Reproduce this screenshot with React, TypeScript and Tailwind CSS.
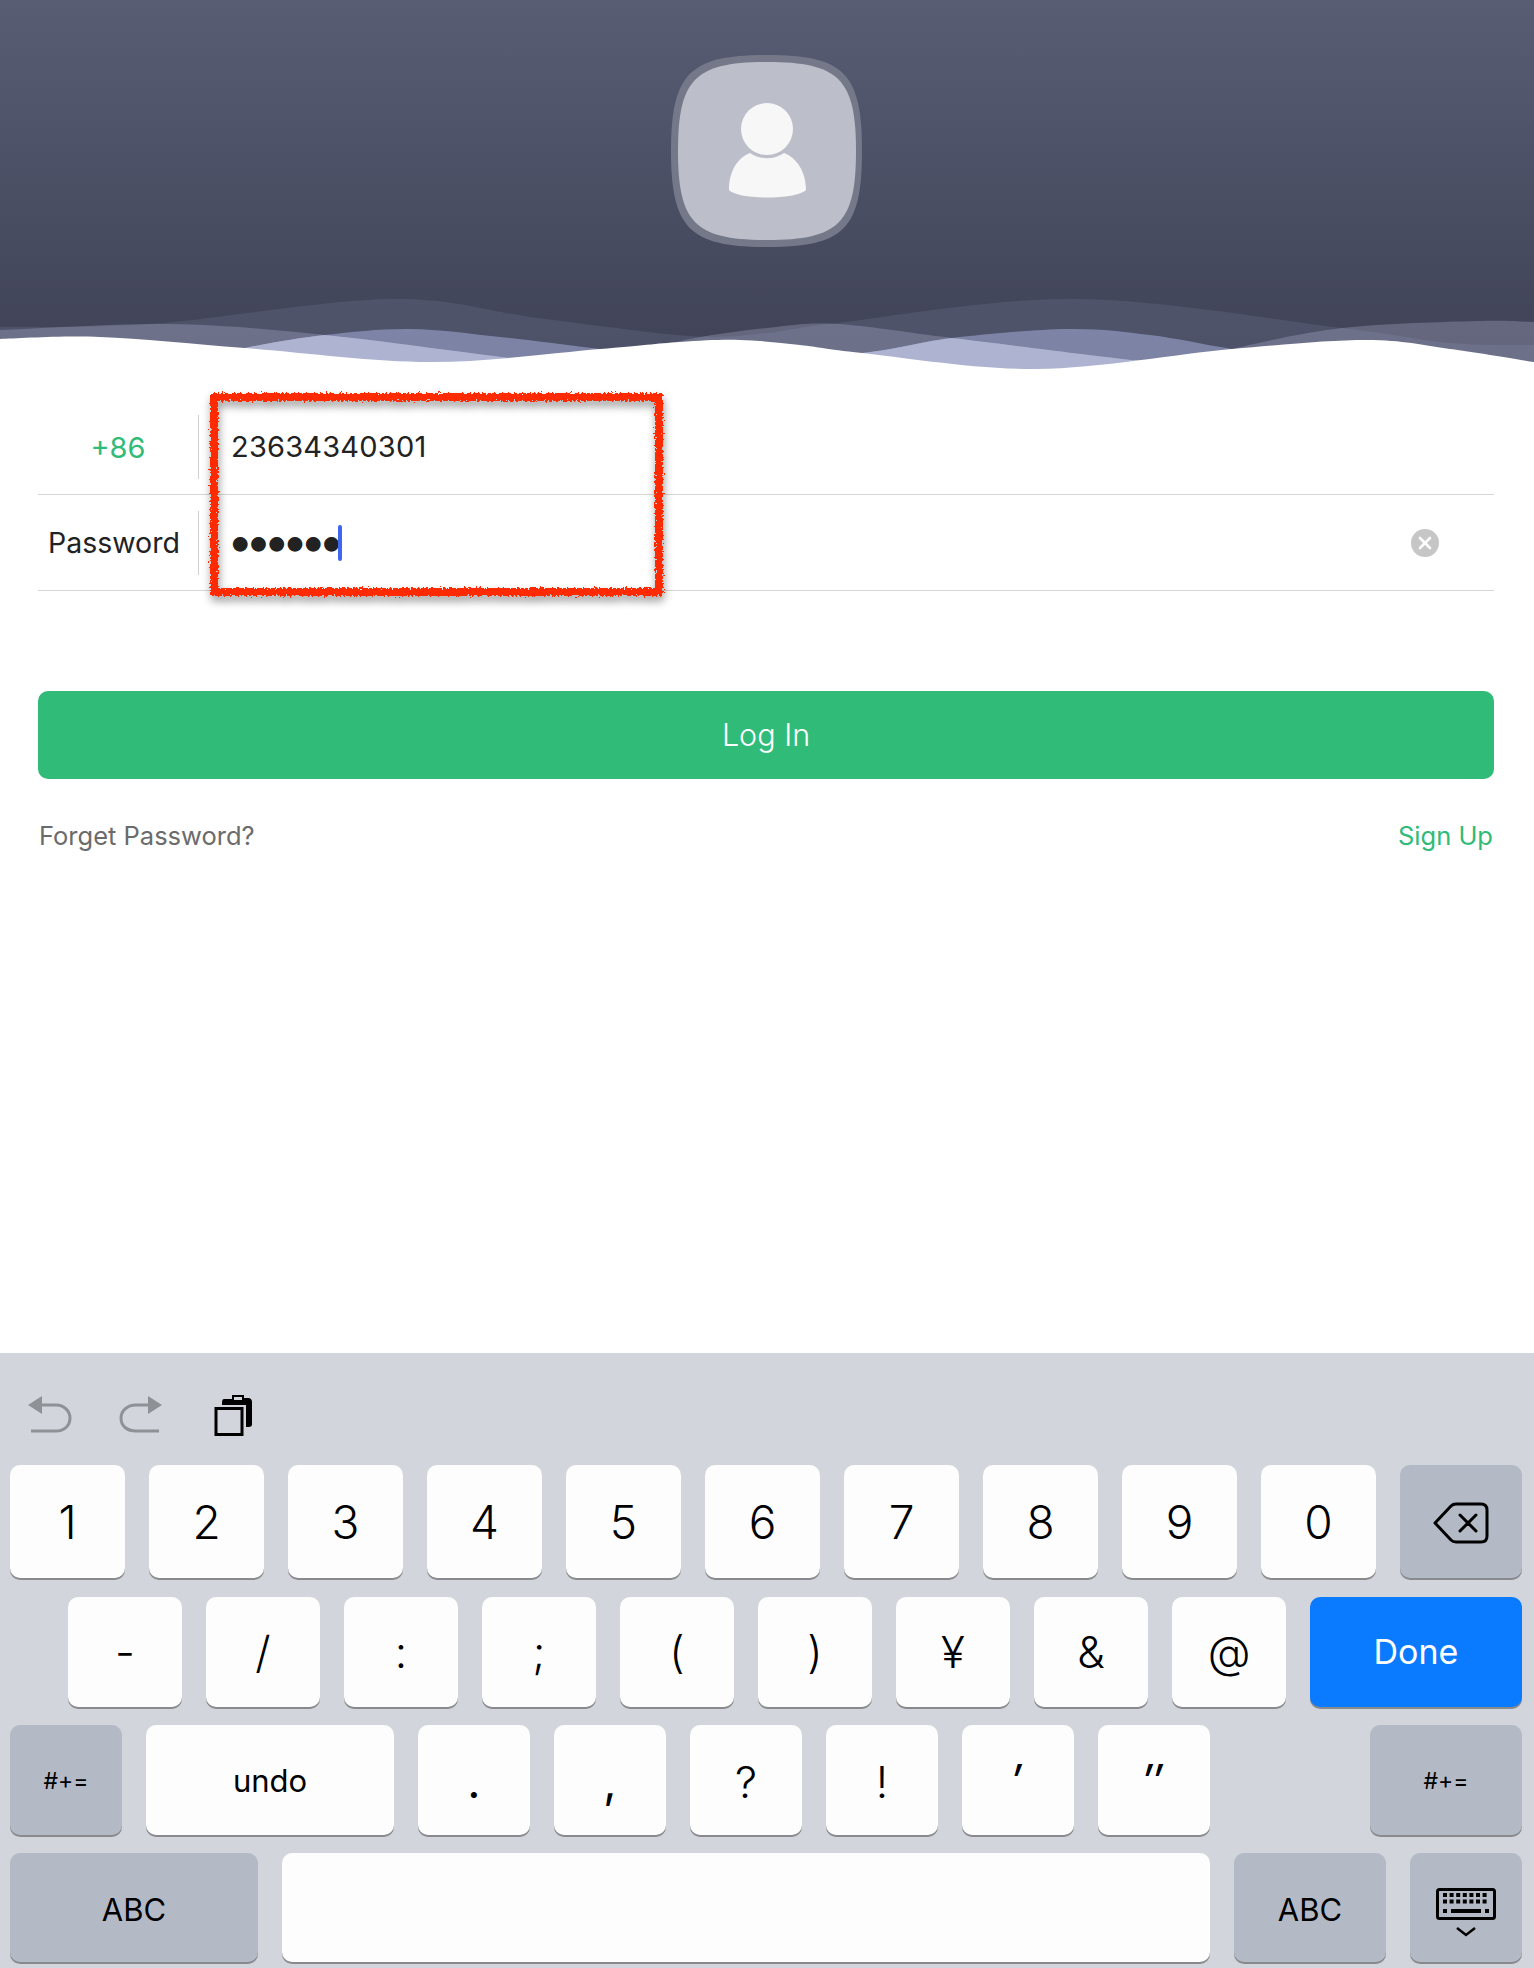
type Pt = [number, number];

// catmull-rom through the points, closed along the bottom of the header
function wave(points: Pt[]) {
    let d = `M${points[0][0]} ${points[0][1]}`;
    for (let i = 0; i < points.length - 1; i++) {
        const p0 = points[i - 1] ?? points[i];
        const p1 = points[i];
        const p2 = points[i + 1];
        const p3 = points[i + 2] ?? p2;
        const c1x = p1[0] + (p2[0] - p0[0]) / 6;
        const c1y = p1[1] + (p2[1] - p0[1]) / 6;
        const c2x = p2[0] - (p3[0] - p1[0]) / 6;
        const c2y = p2[1] - (p3[1] - p1[1]) / 6;
        d += ` C${c1x} ${c1y} ${c2x} ${c2y} ${p2[0]} ${p2[1]}`;
    }
    return `${d} L1534 400 L0 400 Z`;
}

const backWave = wave([[0, 327], [150, 324], [390, 299], [538, 318], [690, 336], [767, 333], [837, 323], [1077, 299], [1342, 328], [1450, 343], [1534, 345]]);
const midWave = wave([[0, 330], [170, 324], [325, 335], [510, 358], [590, 365], [680, 341], [767, 328], [837, 324], [952, 338], [1142, 361], [1190, 363], [1232, 349], [1342, 328], [1477, 321], [1534, 322]]);
const frontWave = wave([[0, 380], [120, 375], [245, 348], [325, 335], [410, 329], [500, 337], [600, 349], [720, 362], [862, 353], [952, 338], [1067, 329], [1150, 335], [1232, 349], [1340, 365], [1534, 380]]);
const whiteWave = wave([[0, 339], [100, 337], [245, 348], [430, 362], [600, 349], [680, 342], [740, 340], [800, 345], [862, 353], [1037, 369], [1232, 349], [1367, 340], [1450, 349], [1534, 362]]);

function Waves() {
    return (
        <svg className="absolute left-0 top-0 h-[370px] w-full" viewBox="0 0 1534 370" preserveAspectRatio="none">
            <defs>
                <clipPath id="mid-clip">
                    <path d={midWave} />
                </clipPath>
            </defs>
            <path d={backWave} fill="#96a5c8" fillOpacity="0.145" />
            <path d={frontWave} fill="#c0c8fa" fillOpacity="0.42" />
            <path d={midWave} fill="#c8c8e6" fillOpacity="0.26" />
            <path d={frontWave} fill="#aeb3d2" clipPath="url(#mid-clip)" />
            <path d={whiteWave} fill="#ffffff" />
        </svg>
    );
}

function Avatar() {
    return (
        <svg width="192" height="192" viewBox="670 55 192 192" className="relative">
            <path d="M766 55 C843 55 861 73 861 151 C861 229 843 247 766 247 C689 247 670 229 670 151 C670 73 689 55 766 55 Z" fill="#757889" />
            <path d="M766 62 C838 62 855 79 855 151 C855 223 838 240 766 240 C694 240 677 223 677 151 C677 79 694 62 766 62 Z" fill="#bcbfc9" />
            <circle cx="766" cy="129" r="26" fill="#f7f7f7" />
            <path d="M749 153 C759 160 773 160 783 153 C796 158 805 172 805 190 C795 200 737 200 728 190 C728 172 736 158 749 153 Z" fill="#f7f7f7" />
        </svg>
    );
}

function RedBox() {
    return (
        <svg className="absolute left-[200px] top-[385px] h-[230px] w-[480px]" viewBox="0 0 480 230">
            <defs>
                <filter id="rough" x="-5%" y="-10%" width="110%" height="125%">
                    <feTurbulence type="fractalNoise" baseFrequency="0.5" numOctaves="3" seed="4" result="noise" />
                    <feDisplacementMap in="SourceGraphic" in2="noise" scale="7" result="edge" />
                    <feDropShadow in="edge" dx="1" dy="5" stdDeviation="4" floodColor="#000000" floodOpacity="0.4" />
                </filter>
            </defs>
            <rect x="14" y="12" width="445" height="195" fill="none" stroke="#ff2a00" strokeWidth="8" filter="url(#rough)" />
        </svg>
    );
}

function Key({ className = '', dark = false, children }: { className?: string; dark?: boolean; children?: React.ReactNode }) {
    return (
        <div
            className={`flex h-full items-center justify-center rounded-[10px] text-black shadow-[0_2px_0_#898a8d] ${
                dark ? 'bg-[#b3bac6]' : 'bg-[#fdfdfd]'
            } ${className}`}
        >
            {children}
        </div>
    );
}

function Toolbar() {
    return (
        <div className="flex h-[112px] items-start pl-[16px] pt-[42px]">
            <svg width="46" height="38" viewBox="0 0 46 38" fill="none">
                <path d="M16 1 L2 10 L16 19 Z" fill="#8e9196" />
                <path d="M16 10 H30 C38 10 44 16 44 23 C44 31 38 36 30 36 H5" stroke="#8e9196" strokeWidth="3" />
            </svg>
            <svg width="46" height="38" viewBox="0 0 46 38" fill="none" className="ml-[46px]">
                <path d="M30 1 L44 10 L30 19 Z" fill="#8e9196" />
                <path d="M30 10 H18 C9 10 3 16 3 23 C3 31 9 36 18 36 H41" stroke="#8e9196" strokeWidth="3" />
            </svg>
            <svg width="40" height="42" viewBox="0 0 40 42" className="ml-[50px]">
                <path d="M10 4 H18 V0 H30 V3 H34 C37 3 38 5 38 7 V29 C38 32 36 32 32 32 V10 H8 C8 7 8 4 10 4 Z" fill="#000000" />
                <rect x="20" y="2" width="8" height="3" fill="#d2d6dc" />
                <rect x="2" y="13.5" width="26" height="26" fill="none" stroke="#000000" strokeWidth="3" />
            </svg>
        </div>
    );
}

const rowOne = ['1', '2', '3', '4', '5', '6', '7', '8', '9', '0'];
const rowTwo = ['-', '/', ':', ';', '(', ')', '¥', '&', '@'];

function Keyboard() {
    return (
        <div className="mt-auto h-[615px] bg-[#d2d6dc] pl-[10px] pr-[12px]">
            <Toolbar />
            <div className="flex h-[113px] gap-[24px]">
                {rowOne.map(k => (
                    <Key key={k} className="flex-1 pt-[2px] text-[46px] font-light">{k}</Key>
                ))}
                <Key dark className="w-[122px] pt-[2px]">
                    <svg width="56" height="42" viewBox="0 0 56 42" fill="none" stroke="#000000" strokeWidth="3" strokeLinejoin="round">
                        <path d="M2 21 L18 4 Q20 2 23 2 H48 Q54 2 54 8 V34 Q54 40 48 40 H23 Q20 40 18 38 Z" />
                        <path d="M27 13 L43 29 M43 13 L27 29" strokeLinecap="round" />
                    </svg>
                </Key>
            </div>
            <div className="mt-[19px] flex h-[110px] gap-[24px] pl-[58px]">
                {rowTwo.map(k => (
                    <Key key={k} className="w-[114px] text-[44px] font-light">{k}</Key>
                ))}
                <Key className="flex-1 !bg-[#0a7bff] pb-[1px] text-[34px] !text-white">Done</Key>
            </div>
            <div className="mt-[18px] flex h-[110px] gap-[24px]">
                <Key dark className="w-[112px] pt-[3px] text-[23px]">#+=</Key>
                <Key className="w-[248px] pt-[3px] text-[31px]">undo</Key>
                <Key className="w-[112px] pt-[3px] text-[46px]">.</Key>
                <Key className="w-[112px] pt-[3px] text-[46px]">,</Key>
                <Key className="w-[112px] pt-[3px] text-[44px] font-light">?</Key>
                <Key className="w-[112px] pt-[3px] text-[44px] font-light">!</Key>
                <Key className="w-[112px] pr-[4px] pt-[3px] text-[46px] italic">′</Key>
                <Key className="w-[112px] pr-[4px] pt-[3px] text-[46px] italic">″</Key>
                <Key dark className="ml-auto w-[152px] pt-[3px] text-[23px]">#+=</Key>
            </div>
            <div className="mt-[18px] flex h-[109px] gap-[24px]">
                <Key dark className="w-[248px] pt-[5px] text-[31px]">ABC</Key>
                <Key className="flex-1" />
                <Key dark className="w-[152px] pt-[5px] text-[31px]">ABC</Key>
                <Key dark className="w-[112px]">
                    <svg width="60" height="50" viewBox="0 0 60 50" className="mt-[10px]">
                        <rect x="1.5" y="1.5" width="57" height="29" rx="2" fill="none" stroke="#000000" strokeWidth="3" />
                        <path d="M7 7 H53 M7 13.5 H53" stroke="#000000" strokeWidth="4" strokeDasharray="4 2.6" />
                        <path d="M7 23 H11 M15 23 H45 M49 23 H53" stroke="#000000" strokeWidth="4" />
                        <path d="M21 40 L30 47 L39 40" fill="none" stroke="#000000" strokeWidth="2.5" />
                    </svg>
                </Key>
            </div>
        </div>
    );
}

export default function App() {
    return (
        <div className="relative flex h-screen flex-col overflow-hidden bg-white font-['Inter',sans-serif]">
            {/* Header */}
            <div className="relative flex h-[370px] shrink-0 justify-center bg-gradient-to-b from-[#585d74] to-[#3f4256] pt-[55px]">
                <Waves />
                <Avatar />
            </div>

            {/* Form */}
            <div className="mt-[29px] pl-[38px] pr-[40px]">
                <div className="flex h-[96px] items-center border-b border-[#d6d6d6]">
                    <div className="flex h-[64px] w-[161px] items-center justify-center border-r border-[#d0d0d0] pt-[2px] text-[29px] text-[#30bb78]">
                        +86
                    </div>
                    <span className="ml-[32px] text-[29px] tracking-[0.2px] text-[#222222]">23634340301</span>
                </div>
                <div className="flex h-[96px] items-center border-b border-[#d6d6d6]">
                    <div className="flex h-[64px] w-[161px] items-center border-r border-[#d0d0d0] pl-[10px] pt-[2px] text-[28.5px] text-[#222222]">
                        Password
                    </div>
                    <span className="ml-[28px] mt-[-5px] text-[47px] leading-none tracking-[-8.2px] text-[#222222]">••••••</span>
                    <div className="ml-[2px] h-[36px] w-[4px] rounded-full bg-[#3f66ee]" />
                    <svg width="28" height="28" viewBox="0 0 28 28" className="ml-auto mr-[55px]">
                        <circle cx="14" cy="14" r="14" fill="#c6c6c6" />
                        <path d="M9 9 L19 19 M19 9 L9 19" stroke="#ffffff" strokeWidth="2.6" strokeLinecap="round" />
                    </svg>
                </div>

                <button className="mt-[100px] h-[88px] w-full rounded-[10px] bg-[#30bb78] text-[30.5px] font-light text-white">Log In</button>

                <div className="mt-[38px] flex justify-between px-[1px] text-[25.5px]">
                    <span className="text-[#6b6b6b]">Forget Password?</span>
                    <span className="text-[#30bb78]">Sign Up</span>
                </div>
            </div>

            <RedBox />
            <Keyboard />
        </div>
    );
}
